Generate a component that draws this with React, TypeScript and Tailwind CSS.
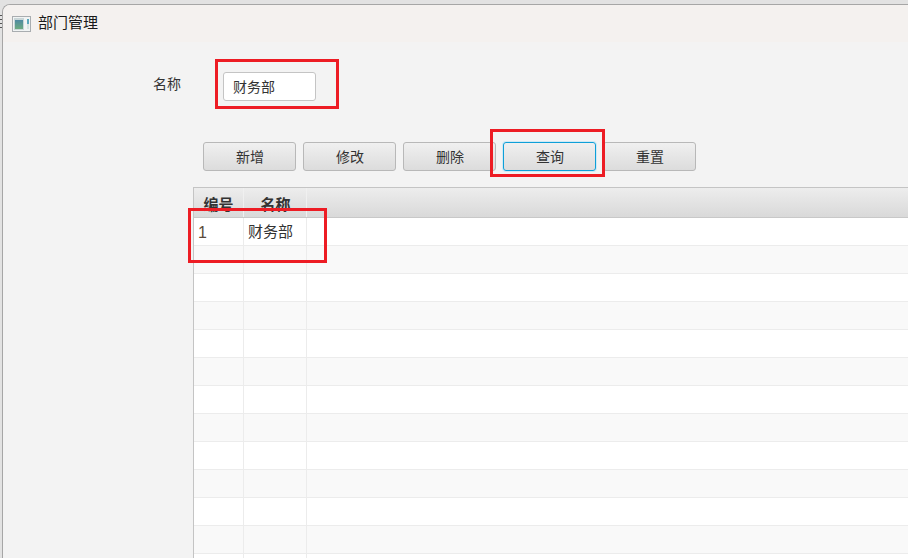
const font = { fontFamily: '"Liberation Sans", "Noto Sans CJK SC", sans-serif' };

const buttons = ["新增", "修改", "删除", "查询", "重置"];
const rows = Array.from({ length: 13 }, (_, i) => i);

function AppIcon() {
  return (
    <svg width="19" height="16" viewBox="0 0 19 16" className="shrink-0">
      <rect x="0.5" y="0.5" width="18" height="15" fill="#f1f4f4" stroke="#a9adb0" />
      <defs>
        <linearGradient id="pane" x1="0" y1="0" x2="0" y2="1">
          <stop offset="0" stopColor="#4f8aa2" />
          <stop offset="1" stopColor="#6bab80" />
        </linearGradient>
      </defs>
      <rect x="2" y="2" width="10" height="12" fill="#c9d6d8" />
      <rect x="3" y="4" width="8" height="9" fill="url(#pane)" />
      <rect x="15" y="3" width="2" height="5" fill="#5ba8bd" />
      <rect x="15" y="8" width="2" height="5" fill="#d7e5e2" />
    </svg>
  );
}

function RedBox({ className }: { className: string }) {
  return <div className={`absolute border-[3px] border-[#ed1c24] ${className}`} />;
}

export default function App() {
  return (
    <div
      className="relative flex h-[558px] w-[908px] flex-col overflow-hidden bg-[#e2e2e2] pl-[2px] pt-[4px] text-[14px] text-[#333333]"
      style={font}
    >
      {/* sliver of the window behind */}
      <div className="absolute left-0 top-[15px] flex h-[13px] w-[2px] flex-col justify-between">
        <div className="h-px bg-[#555555]" />
        <div className="h-px bg-[#555555]" />
        <div className="h-px bg-[#555555]" />
        <div className="h-px bg-[#555555]" />
      </div>

      <div className="flex min-h-0 flex-1 flex-col overflow-hidden rounded-tl-[8px] border-l border-t border-[#a6a6a6] bg-[#f3f3f3]">
        <div className="flex h-[37px] shrink-0 items-center gap-[7px] bg-[#f4f1ef] pl-[9px] text-[15px] text-[#1a1a1a]">
          <AppIcon />
          <span>部门管理</span>
        </div>

        <div className="mt-[30px] flex shrink-0 pl-[150px]">
          <label className="w-[70px] pt-[3px] leading-[18px]">名称</label>
          <div className="flex h-[29px] w-[93px] items-center rounded-[3px] border border-[#c4c4c4] bg-white pl-[9px] pt-[1px]">
            财务部
          </div>
        </div>

        <div className="ml-[200px] mt-[41px] flex shrink-0 gap-[7px]">
          {buttons.map((b) => (
            <button
              key={b}
              className={`h-[29px] w-[93px] rounded-[3px] border bg-gradient-to-b from-[#f0f0f0] to-[#dcdcdc] pl-[1px] pt-[1px] ${
                b === "查询" ? "border-[#0e9fd8] shadow-[0_0_0_1px_#cfe9f5]" : "border-[#b8b8b8]"
              }`}
            >
              {b}
            </button>
          ))}
        </div>

        <div className="ml-[190px] mt-[16px] min-h-0 flex-1 overflow-hidden border-l border-t border-[#c4c4c4] bg-white">
          <div className="flex h-[30px] overflow-hidden border-b border-[#c8c8c8] bg-gradient-to-b from-[#ededed] to-[#d9d9d9] text-[15px] font-bold">
            <div className="w-[50px] shrink-0 border-r border-[#f0f0f0] pt-[7px] text-center leading-[20px]">编号</div>
            <div className="w-[63px] shrink-0 border-r border-[#f0f0f0] pl-[1px] pt-[7px] text-center leading-[20px]">名称</div>
            <div className="flex-1" />
          </div>
          {rows.map((i) => (
            <div
              key={i}
              className={`flex h-[28px] border-b border-[#ececec] text-[15px] ${i % 2 === 0 ? "bg-white" : "bg-[#f9f9f9]"}`}
            >
              <div className="flex w-[50px] shrink-0 items-center border-r border-[#ececec] pl-[4px] pt-[2px] text-[16px] text-[#5a4a3a]">
                {i === 0 ? "1" : ""}
              </div>
              <div className="flex w-[63px] shrink-0 items-center border-r border-[#ececec] pl-[4px] pt-[2px]">
                {i === 0 ? "财务部" : ""}
              </div>
              <div className="flex-1" />
            </div>
          ))}
        </div>
      </div>

      <RedBox className="left-[215px] top-[59px] h-[50px] w-[124px]" />
      <RedBox className="left-[490px] top-[129px] h-[48px] w-[115px]" />
      <RedBox className="left-[188px] top-[208px] h-[55px] w-[139px]" />
    </div>
  );
}
